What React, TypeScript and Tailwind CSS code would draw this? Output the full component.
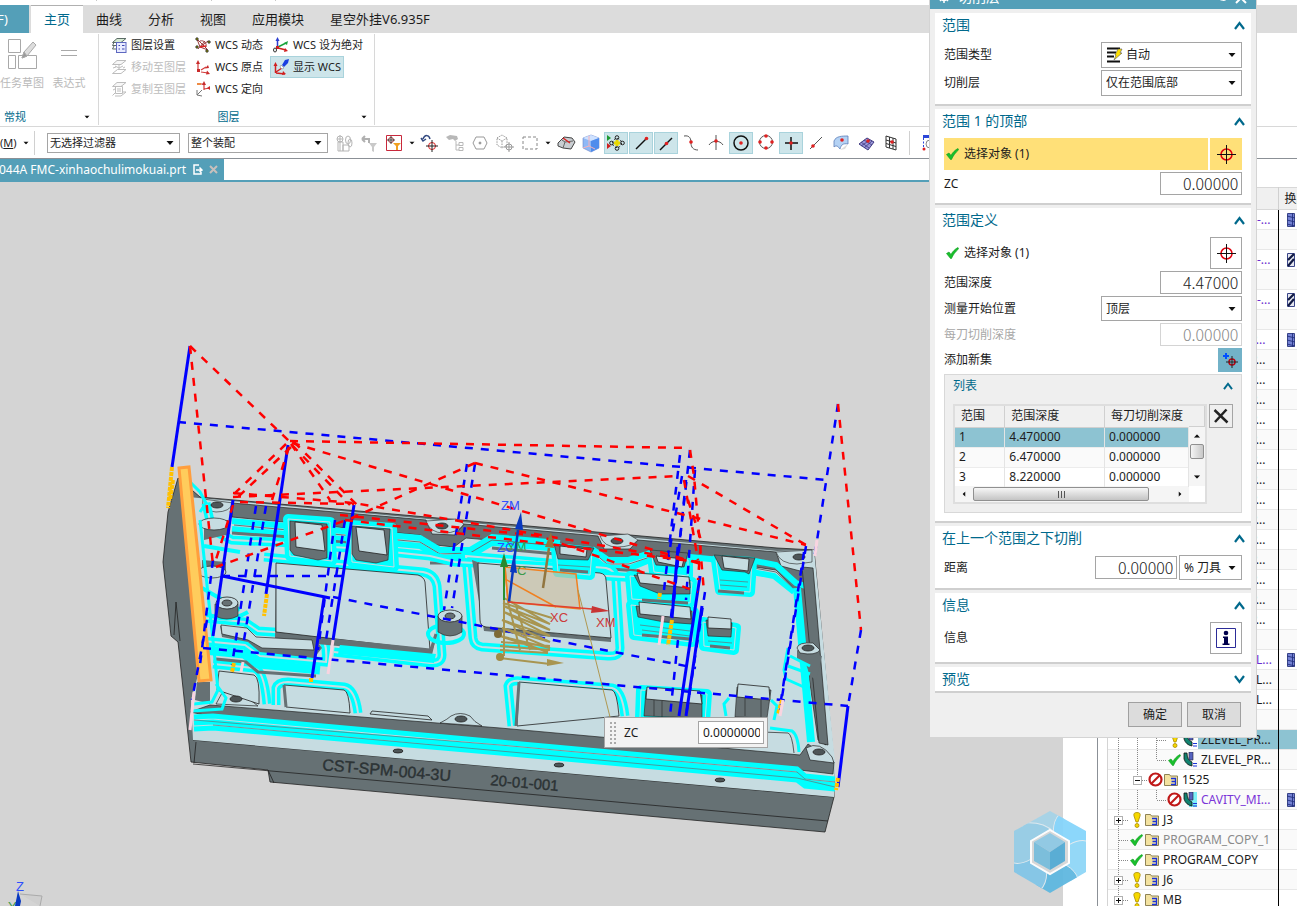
import React, { useState } from 'react';

const FLOOR = '#c6dce1';
const WALL = '#667174';
const CYAN = '#00ffff';

/* ---------- small shared pieces ---------- */

const Caret = ({ className = '' }: { className?: string }) => (
  <svg width="8" height="4" viewBox="0 0 8 4" className={`shrink-0 pointer-events-none ${className}`}>
    <path d="M0.5 0h7L4 4z" fill="#111" />
  </svg>
);

interface DropdownProps {
  label: string;
  value: string;
  className: string;
  icon?: React.ReactNode;
}

const Dropdown: React.FC<DropdownProps> = ({ label, value, className, icon }) => (
  <div className={`flex items-center border border-[#a5a5a5] bg-white ${className}`}>
    {icon}
    <select aria-label={label} defaultValue={value} className="min-w-0 flex-1 appearance-none bg-transparent outline-none">
      <option>{value}</option>
    </select>
    <Caret className="mr-[5px]" />
  </div>
);

const Check = () => (
  <svg width="13" height="12" viewBox="0 0 13 12" className="shrink-0">
    <path d="M0.5 6.5L3 5l2 2.5C6.500 4.500 9 2 12 0.500l0.500 1.500C9.500 4.500 7 8 5.500 11.500H4.500z" fill="#19c02c" stroke="#0a9a1c" strokeWidth=".6" />
  </svg>
);

const Target = () => (
  <svg width="20" height="20" viewBox="0 0 20 20" fill="none" shapeRendering="crispEdges">
    <circle cx="10.500" cy="10.500" r="5.500" stroke="#e0000c" strokeWidth="1.500" shapeRendering="auto" />
    <path d="M10.500 1v19M1 10.500h19" stroke="#111" />
  </svg>
);

/* ---------- ribbon icons ---------- */

const Layers = ({ kind }: { kind: 'settings' | 'move' | 'copy' }) => {
  const muted = kind !== 'settings';
  return (
    <svg width="16" height="16" viewBox="0 0 16 16" fill="none" stroke={muted ? '#bdbdbd' : '#5b6b66'}>
      <path d="M6 1.500h9l-5 4H1.500z" fill={muted ? '#f7f7f7' : '#d6ebd4'} />
      {kind === 'settings' && (
        <>
          <path d="M3 5.500L1.500 8.500H5M3 9L1.500 12H5" />
          <rect x="5.500" y="5.500" width="9.500" height="10" fill="#e9ecff" stroke="#5d68c0" />
          <path d="M7.500 8.500h1.500M7.500 12h1.500M11 8.500h2.500M11 12h2.500" stroke="#3b46b0" />
        </>
      )}
      {kind === 'move' && <path d="M4 7l4 2 4-2M8 6v5M1.500 14.500l5-4H15l-5 4zM2 9l3-1M12 9l2-1" />}
      {kind === 'copy' && <path d="M4.500 5.500h7v7h-7zM6 8h4M6 10h4M1.500 14.500l3-3M4 15h6l5-4h-3M2 9l2-1" />}
    </svg>
  );
};

const WcsIcon = ({ kind }: { kind: 'move' | 'origin' | 'orient' | 'abs' | 'show' }) => (
  <svg width="16" height="16" viewBox="0 0 16 16" fill="none">
    {kind === 'move' && (
      <>
        <path d="M2 2l3 8 8 3M5 10l8-6M3 3l9 9M3 12l7-8M5 4c4-1 7 2 6 6" stroke="#9a3a3a" />
        <path d="M5 10l6-1" stroke="#e02020" strokeWidth="1.500" />
        <path d="M1 1h2v2H1zM13 4h2v2h-2zM1 9h2v2H1zM11 13h2v2h-2z" fill="#e8e800" stroke="#222" strokeWidth=".9" />
      </>
    )}
    {kind === 'origin' && (
      <>
        <path d="M3 4v6M6 13l7 1M6 11l5-3" stroke="#d23a3a" strokeWidth="1.200" />
        <path d="M3 1l2 4H1zM15 15l-4 .5 1-4zM13 6l1 3-4 .5zM2 10h3v3H2z" fill="#c92b2b" />
      </>
    )}
    {kind === 'orient' && (
      <>
        <path d="M2 3h7M9 2v7M9 8l6-1" stroke="#d23a3a" strokeWidth="1.200" />
        <path d="M9 0l2 4H7zM15 5v4l-3-2z" fill="#c92b2b" />
        <path d="M2 2h4v2H2z" fill="#ee8b44" />
        <path d="M2 9v5l5 1M2 14l5-5" stroke="#777" />
      </>
    )}
    {kind === 'abs' && (
      <>
        <path d="M4.500 3v8" stroke="#2c3fd0" strokeWidth="1.500" />
        <path d="M4.500 0l2 4h-4z" fill="#2c3fd0" />
        <path d="M5 10l8-4" stroke="#19a33a" strokeWidth="1.500" />
        <path d="M15 4l-1 4-3-2z" fill="#19a33a" />
        <path d="M5 11l8 2" stroke="#d02020" strokeWidth="1.500" />
        <path d="M15 14l-4 1 1-4zM3 9h3v3H3z" fill="#d02020" />
        <ellipse cx="2" cy="13" rx="1.500" ry="2" stroke="#333" />
      </>
    )}
    {kind === 'show' && (
      <>
        <path d="M2.500 6v8M3 14l9 1M3 13l6-4" stroke="#d02020" strokeWidth="1.500" />
        <path d="M2.500 3l2 4h-4zM13 15l-4 1 1-4z" fill="#d02020" />
        <path d="M9 6l3-5 4-1-1 4-4 4z" fill="#1b3fe0" />
        <path d="M8 6l3 3-2 1-2-2z" fill="#fff" stroke="#888" strokeWidth=".6" />
      </>
    )}
  </svg>
);

const ribbonLabel = 'flex items-center gap-1 h-[22px] whitespace-nowrap';

const Ribbon = () => (
  <div className="flex h-[93px] py-px bg-white text-[11px] leading-4">
    <div className="flex flex-col justify-between w-[99px] border-r border-[#d8d8d8] shrink-0">
      <div className="flex pt-[3px] text-[#b9b9b9]">
        <button className="flex flex-col items-center w-[46px] pr-[2px] shrink-0 whitespace-nowrap">
          <svg width="32" height="34" viewBox="0 0 32 34" fill="none" stroke="#a9a9a9">
            <path d="M2.500 2.500h12v13h-12zM2.500 18.500h7v13h-7zM12.500 18.500h18v13h-18z" fill="#fff" />
            <path d="M16 21l2-6L27 5l3 3-9 11z" fill="#ddd" />
            <path d="M16 21l2-6 3 4z" fill="#999" />
          </svg>
          <span className="mt-1">任务草图</span>
        </button>
        <button className="flex flex-col items-center w-[46px] shrink-0 whitespace-nowrap">
          <svg width="32" height="34" viewBox="0 0 32 34" stroke="#a9a9a9">
            <path d="M8 13.500h16M8 18.500h16" />
          </svg>
          <span className="mt-1">表达式</span>
        </button>
      </div>
      <div className="flex items-center justify-between pl-1 pr-[7px] text-[#00698c]">
        常规 <Caret className="scale-75" />
      </div>
    </div>
    <div className="flex flex-col justify-between w-[276px] border-r border-[#d8d8d8] shrink-0">
      <div className="flex pl-3">
        <div className="w-[84px] shrink-0">
          <button className={ribbonLabel}><Layers kind="settings" />图层设置</button>
          <button className={`${ribbonLabel} text-[#bdbdbd]`}><Layers kind="move" />移动至图层</button>
          <button className={`${ribbonLabel} text-[#bdbdbd]`}><Layers kind="copy" />复制至图层</button>
        </div>
        <div className="w-[75px] shrink-0">
          <button className={ribbonLabel}><WcsIcon kind="move" />WCS 动态</button>
          <button className={ribbonLabel}><WcsIcon kind="origin" />WCS 原点</button>
          <button className={ribbonLabel}><WcsIcon kind="orient" />WCS 定向</button>
        </div>
        <div className="shrink-0">
          <button className={`${ribbonLabel} pl-[3px]`}><WcsIcon kind="abs" />WCS 设为绝对</button>
          <button className={`${ribbonLabel} pl-[2px] pr-[2px] border border-[#a9d3dc] bg-[#cde5ea]`}><WcsIcon kind="show" />显示 WCS</button>
        </div>
      </div>
      <div className="flex items-center text-[#00698c] pr-[6px]">
        <span className="flex-1 text-center pr-[2px]">图层</span> <Caret className="scale-75" />
      </div>
    </div>
  </div>
);

/* ---------- selection bar ---------- */

interface Tool {
  id: string;
  on?: boolean;
  menu?: boolean;
  art: React.ReactNode;
}

const dot = (x: number, y: number) => <circle cx={x} cy={y} r="1.800" fill="#e02020" stroke="none" />;

const tools: Tool[] = [
  { id: 'assembly', art: <g stroke="#b5b5b5"><path d="M6 2v16M3 6h6M4 9h5v9H4zM9 12h6v6H9z" /><circle cx="6" cy="6" r="3" /><ellipse cx="14" cy="7" rx="2.500" ry="4" /><ellipse cx="16" cy="10" rx="2" ry="4" /></g> },
  { id: 'reset-filter', art: <g><path d="M3 6h7v4M3 6l3-3M3 6l3 3" stroke="#b0b0b0" strokeWidth="2" /><path d="M10 10h8l-3 4v5l-2-1v-4z" fill="#c9c9c9" /></g> },
  { id: 'filter', menu: true, art: <g><path d="M2.500 2.500h15v15h-15z" stroke="#c8283c" /><circle cx="7" cy="7" r="2.500" stroke="#933" /><path d="M7 3v8M3 7h8" stroke="#444" /><path d="M9 10h8l-3 3v4h-2v-4z" fill="#f0a020" /></g> },
  { id: 'deselect', art: <g><path d="M3 6C5 1 9 2 10 6M1 5l2 3 3-2" stroke="#334a80" strokeWidth="1.500" /><circle cx="12" cy="13" r="3.500" stroke="#e02020" /><path d="M12 7v12M6 13h12" stroke="#222" /></g> },
  { id: 'find-tree', art: <g><path d="M1 4l4-2 7 1 1 3-3 2-2-2-4 1z" fill="#b8b8b8" /><path d="M11 8v9h3M11 12h3M14 9.500h4v3h-4zM14 14.500h4v3h-4z" stroke="#b8b8b8" /></g> },
  { id: 'hex', art: <g stroke="#999"><path d="M6 4h8l3 6-3 6H6l-3-6z" /><circle cx="10" cy="10" r="1" fill="#888" /></g> },
  { id: 'cube-target', art: <g stroke="#999"><path d="M2 5l5-3 5 3v7l-5 3-5-3zM2 5l5 3 5-3M7 8v7" strokeDasharray="1.500 1" /><circle cx="14" cy="14" r="3" /><path d="M14 9v10M9 14h10" /></g> },
  { id: 'rect', menu: true, art: <path d="M3 4h14v12H3z" stroke="#888" strokeDasharray="3 2" /> },
  { id: 'shade', art: <g><path d="M2 10l6-6 8 1 3 4-4 7-8-1-5-2z" fill="#c9ced2" stroke="#444" /><path d="M7 15l2-6 8-1M9 9L6 7" stroke="#666" /><path d="M7 5l7 5" stroke="#d22" strokeWidth="1.500" /></g> },
  { id: 'cube', art: <g><path d="M2 5l8-3 8 3v10l-8 4-8-4z" fill="#8fb8f6" stroke="#6d84c8" strokeWidth=".6" /><path d="M2 5l8 3 8-3-8-3z" fill="#cfe2ff" /><path d="M10 8v11l8-4V5z" fill="#4f8cec" /><path d="M8 3v10M2 15l6-2 6 3" stroke="#f6b0b8" /></g> },
  { id: 'snap', on: true, art: <g><path d="M1 2l4 3-4 3z" fill="#1c9a30" /><path d="M1 10l4 3-4 3z" fill="#d02020" /><path d="M11 7v6M8 10h6" stroke="#e8d800" strokeWidth="3" /><g stroke="#222"><circle cx="11" cy="4.500" r="1.800" /><circle cx="11" cy="15.500" r="1.800" /><circle cx="5.500" cy="10" r="1.800" /><circle cx="16.500" cy="10" r="1.800" /><circle cx="11" cy="10" r="4.500" strokeDasharray="2 1.500" /></g></g> },
  { id: 'end-point', on: true, art: <g><path d="M5 16L15 6" stroke="#111" strokeWidth="1.500" />{dot(15.5, 5.5)}</g> },
  { id: 'mid-point', on: true, art: <g><path d="M4 17L16 5" stroke="#111" strokeWidth="1.500" />{dot(10.5, 10.5)}</g> },
  { id: 'curve', art: <g><path d="M3 3c6-1 7 3 7 7s2 7 7 7" stroke="#555" />{dot(10, 9)}</g> },
  { id: 'intersect', art: <g><path d="M10 2v15M3 12c3-5 11-5 14 0" stroke="#555" />{dot(10, 8)}</g> },
  { id: 'centre', on: true, art: <g><circle cx="10" cy="10" r="7" stroke="#111" strokeWidth="1.500" />{dot(10, 10)}</g> },
  { id: 'quadrant', art: <g><circle cx="10" cy="9" r="6.500" stroke="#555" />{dot(10, 3)}{dot(10, 15)}{dot(4, 9)}{dot(16, 9)}</g> },
  { id: 'point', on: true, art: <g><path d="M10 4v13M4 10h13" stroke="#111" strokeWidth="1.500" />{dot(10, 10)}</g> },
  { id: 'on-curve', art: <g><path d="M4 16L16 4" stroke="#555" />{dot(7, 13)}</g> },
  { id: 'on-face', art: <g><path d="M3 8c2-5 8-5 14-5v8c-5-1-7 1-8 5-2-3-4-4-6-2z" fill="#b4d2f4" stroke="#5a7cb8" strokeWidth=".8" /><path d="M17 11l-3 5-5 1" fill="#ddd" />{dot(11, 7)}</g> },
  { id: 'mesh', art: <g><path d="M3 11l8-6 7 4-6 8z" fill="#9a96d8" stroke="#3f3a80" /><path d="M5 9l8 6M8 7l8 5M5 13l9-6M8 15l8-7" stroke="#3f3a80" strokeWidth=".8" />{dot(12, 8)}</g> },
  { id: 'grid', art: <g><path d="M5 3l10 3v11L5 14zM5 7l10 3M5 10.500l10 3M8.500 4v11M12 5v11" stroke="#333" />{dot(11, 9)}</g> },
];

const SelectionBar = () => (
  <div className="flex items-center h-8 bg-white border-t border-[#d8d8d8] text-[11px] leading-4 overflow-hidden">
    <button className="flex items-center gap-[5px] w-[35px] h-6 border-r border-[#d0d0d0] mr-3 shrink-0">
      <span>(<u>M</u>)</span> <Caret className="scale-75" />
    </button>
    <Dropdown label="选择过滤器" value="无选择过滤器" className="w-[133px] h-5 pl-[2px] shrink-0" />
    <Dropdown label="选择范围" value="整个装配" className="w-[140px] h-5 pl-[2px] ml-2 mr-1 shrink-0" />
    <div className="flex items-center gap-px shrink-0">
      {tools.map(tool => (
        <React.Fragment key={tool.id}>
          <button
            aria-label={tool.id}
            className={`flex items-center justify-center w-6 h-[22px] border ${tool.on ? 'border-[#a9d3dc] bg-[#cde5ea]' : 'border-transparent'}`}
          >
            <svg width="20" height="20" viewBox="0 0 20 20" fill="none">{tool.art}</svg>
          </button>
          {tool.menu && <Caret className="scale-75 mx-px" />}
        </React.Fragment>
      ))}
    </div>
    <div className="h-6 w-px bg-[#d0d0d0] ml-[6px] mr-3 shrink-0" />
    <svg width="16" height="16" viewBox="0 0 16 16" fill="none" className="shrink-0">
      <path d="M1 1.500h14" stroke="#2b46d8" strokeWidth="3" />
      <path d="M1.500 3v11" stroke="#2b46d8" strokeDasharray="2 1.500" />
      <circle cx="8" cy="9" r="4" stroke="#888" />
      <circle cx="2" cy="14" r="1.500" fill="#d22" />
    </svg>
  </div>
);

/* ---------- model viewport ---------- */

interface Block {
  halo: string;
  side: string;
  top: string;
}

const blocks: Block[] = [
  { halo: 'M288 519L330 522L332 561L290 556Z', side: 'M290 521L327 524L327 558L318 560L294 555L290 550Z', top: 'M295 522L322 525L325 551L296 547Z' },
  { halo: 'M350 525L392 528L394 567L352 562Z', side: 'M352 526L390 529L388 560L376 563L356 560L352 554Z', top: 'M356 527L384 530L387 555L359 551Z' },
  { halo: 'M556 548L592 552L590 575L558 572Z', side: 'M554 544L594 548L588 560L558 559Z', top: 'M560 546L587 549L586 557L560 554Z' },
  { halo: 'M652 556L688 560L688 576L654 572Z', side: 'M650 550L688 553L684 567L656 565Z', top: 'M656 556L684 559L682 567L658 562Z' },
  { halo: 'M716 560L752 562L750 592L720 590Z', side: 'M714 555L755 558L749 574L745 572L722 570Z', top: 'M722 556L749 559L748 571L724 568Z' },
  { halo: 'M630 576L692 582L690 603L632 599Z', side: 'M634 575L690 580L690 594L660 594L640 586Z', top: 'M637 573L689 577L690 588L640 583Z' },
  { halo: 'M631 605L694 612L692 642L634 635Z', side: 'M636 606L692 611L692 624L664 622L638 617Z', top: 'M639 602L690 607L691 619L640 614Z' },
  { halo: 'M703 622L736 628L734 650L704 646Z', side: 'M706 620L732 623L731 637L708 636Z', top: 'M708 617L731 619L731 629L708 628Z' },
  { halo: 'M641 690L707 694L705 722L640 718Z', side: 'M646 690L702 695L702 718L644 716Z', top: 'M647 687L700 691L702 704L646 699Z' },
];

const haloWide = [
  'M264 557L423 572Q435 574 437 586L442 655Q442 664 430 663L334 652',
  'M466 556L606 568Q615 570 616 580L620 648Q620 657 608 656L482 647Q474 646 473 638Z',
  'M205 618L245 622L258 631L318 635Q328 640 326 662L260 656L245 645L203 641',
  'M213 664L254 668Q264 670 267 704',
  'M276 705L276 688Q278 682 288 682L344 687Q355 689 358 713',
  'M512 726L508 686Q510 680 520 681L612 688Q622 690 625 716',
  'M206 503L212 530L232 540L292 543M332 547L350 548M392 552L430 556L455 562L556 567L590 575L640 578',
];

const backCyan = [
  'M232 521L420 538L440 550L470 550L492 537L560 543',
  'M232 529L420 546L440 558L470 556L492 543L560 549',
  'M592 549L608 560L628 560L650 553L720 560M750 560L776 565L796 583L812 588',
  'M592 557L606 568L630 568L650 560',
  'M752 572L774 576L794 592',
];

const redDashes = [
  'M190 346L213 565', 'M190 346L289 441', 'M290 441L690 448', 'M286 444L233 495', 'M291 447L237 498',
  'M289 447L272 500', 'M292 445L350 505', 'M294 442L358 506', 'M291 444L330 500', 'M292 443L704 565',
  'M233 497L680 476', 'M233 493L354 503L704 563', 'M240 502L354 504', 'M475 463L352 518L216 567',
  'M475 463L806 545', 'M340 515L540 536L698 592', 'M690 450L694 476L704 592', 'M688 476L806 545',
  'M688 500L701 540L698 580', 'M838 404L861 630', 'M233 505L214 566', 'M345 520L700 562', 'M684 480L698 560',
];

const blueDashes = [
  'M178 422L827 480', 'M838 404L814 560', 'M203 648L848 706', 'M861 630L848 706', 'M222 576L342 576',
  'M333 597L696 668', 'M207 620L192 700', 'M475 464L452 608', 'M467 464L444 610', 'M256 506L232 665',
  'M266 506L244 640', 'M345 520L326 640', 'M335 520L318 650', 'M806 546L779 716', 'M804 552L781 700',
  'M680 455L664 590', 'M690 450L671 617', 'M686 480L674 600', 'M682 476L668 560', 'M678 640L670 716',
  'M705 592L686 716', 'M695 470L686 600', 'M213 560L200 665',
];

const blueSolid = [
  'M190 346L172 467', 'M288 445L266 594', 'M233 500L213 636', 'M354 505L333 640', 'M324 598L312 678',
  'M678 547L672 618', 'M700 576L679 716', 'M848 706L838 787', 'M222 576L330 598', 'M686 716L702 606',
];

const holes: number[][] = [
  [217, 505, 6, 3], [442, 526, 6, 3], [617, 541, 6, 3], [799, 557, 6, 3], [808, 648, 6, 3], [819, 752, 6, 3],
  [461, 719, 6, 3], [236, 699, 6, 3], [398, 751, 5, 2], [559, 765, 5, 2], [720, 780, 5, 2],
];

const Viewport = () => (
  <svg width="1063" height="724" viewBox="0 182 1063 724" fill="none" className="block shrink-0" aria-label="零件模型">
    {/* body and side walls */}
    <path d="M178 478L168 512L163 562L171 636L178 642L191 762L268 770L270 782L825 832L834 797L834 764L814 550L777 548L200 497Z" fill={WALL} stroke="#222" strokeWidth=".8" />
    <path d="M193 740L833 797M193 764L828 821M268 770L274 783M196 742L194 763M174 635L176 602L180 641" stroke="#222" strokeWidth=".8" />
    <path d="M188 497L777 551L814 550L835 762L834 797L193 740L191 700L205 650Z" fill={FLOOR} />
    {/* back wall */}
    <path d="M232 503L426 520L432 534L455 535L464 524L598 536L604 549L630 549L638 540L776 552L781 566L804 572L826 745L818 740L797 592L776 570L700 559L636 555L624 563L606 561L594 549L466 538L454 547L436 545L420 535L232 517Z" fill={WALL} stroke="#222" strokeWidth=".7" />
    <path d="M426 521Q430 533 444 533Q458 533 464 524L456 519ZM600 536Q604 547 617 547Q632 547 638 540L628 534ZM776 552Q780 564 797 564L812 562L812 550ZM203 499Q200 511 216 512Q230 512 233 503Z" fill={FLOOR} stroke="#222" strokeWidth=".6" />
    {backCyan.map(d => <path key={d} d={d} stroke={CYAN} strokeWidth="6" />)}
    <path d="M234 525L420 542L440 554L470 553L492 540L560 546M754 568L776 572L794 589M594 553L607 564L629 564L650 557" stroke={WALL} strokeWidth="1" />
    <path d="M232 533L290 537M332 541L350 543M492 548L556 554M594 568L640 571M430 563L462 563" stroke={WALL} strokeWidth="3" />
    {/* right wall */}
    <path d="M797 588L811 742" stroke={CYAN} strokeWidth="8" />
    <path d="M802 567L813 568L828 745L819 743Z" fill={WALL} stroke="#222" strokeWidth=".7" />
    <path d="M797 650L797 660L806 664L810 676L816 680L822 656Z" fill={WALL} />
    <path d="M797 648Q798 642 813 643L820 650Q816 656 800 653Z" fill={FLOOR} stroke="#222" strokeWidth=".7" />
    <path d="M788 648L784 670L786 679L806 688M790 656L810 666M788 666L810 674" stroke={CYAN} strokeWidth="3" />
    {/* front wall */}
    <path d="M210 705L500 728L800 755L808 744L834 762L833 774L800 770L500 741L210 716L190 712Z" fill={WALL} stroke="#222" strokeWidth=".7" />
    <path d="M806 748Q820 740 832 757L834 763L810 760Z" fill={FLOOR} stroke="#222" strokeWidth=".7" />
    <path d="M440 723Q448 719 451 716Q460 711 470 716Q474 722 482 726Z" fill={FLOOR} stroke="#222" strokeWidth=".7" />
    <path d="M216 704L222 693Q238 688 258 706Z" fill={FLOOR} stroke="#222" strokeWidth=".7" />
    <path d="M194 717L213 716L500 742L797 769L805 776L835 779M194 723L213 722L500 748L797 775L805 782L835 785M194 729L213 728L500 753L797 780L805 786L835 789" stroke={CYAN} strokeWidth="5" />
    <path d="M194 720L500 745L797 772L805 779L835 782M213 725L500 751L797 778L835 787" stroke={WALL} strokeWidth=".7" />

    {haloWide.map(d => (
      <g key={d}>
        <path d={d} stroke={CYAN} strokeWidth="9" />
        <path d={d} stroke={FLOOR} strokeWidth="2" />
      </g>
    ))}
    {/* left bosses */}
    <path d="M204 520L228 520L230 534L204 540ZM202 560L226 562L226 574L202 576Z" fill={WALL} />
    <ellipse cx="214" cy="524" rx="15" ry="6" fill={FLOOR} stroke="#222" strokeWidth=".7" />
    <ellipse cx="212" cy="572" rx="14" ry="6" fill={FLOOR} stroke="#222" strokeWidth=".7" />
    <path d="M202 588L240 610M204 546L240 552M200 610Q224 626 248 612" stroke={CYAN} strokeWidth="4" />

    {/* raised pads */}
    <path d="M276 563L283 565L284 632L430 648L436 638L432 655L275 640ZM472 560L480 563L486 627L611 638L611 642L484 631Z" fill={WALL} />
    <path d="M340 645L436 654L434 663L338 654Z" fill={CYAN} />
    <path d="M276 563L418 575Q424 577 425 582L430 650L276 632Z" fill={FLOOR} stroke="#222" strokeWidth=".8" />
    <path d="M478 563L600 573Q606 574 606 580L611 638L486 627Q480 626 480 620Z" fill={FLOOR} stroke="#222" strokeWidth=".8" />
    <path d="M332 640L430 650M436 634L431 650" stroke={WALL} strokeWidth="3" />
    <path d="M220 626L245 629L258 640L316 640L322 648L314 658L260 652L248 642L222 637Z" fill={WALL} />
    <path d="M221 625L247 628L256 637L312 640L314 650L262 648L248 640L222 634Z" fill={FLOOR} stroke="#222" strokeWidth=".7" />
    <path d="M204 650L244 654L258 664L320 670" stroke={CYAN} strokeWidth="9" />
    <path d="M216 659L246 662L258 672L316 676" stroke={WALL} strokeWidth="3" />
    <path d="M219 671L254 675Q260 677 259 704L217 690ZM284 685L344 690Q349 691 350 713L286 707ZM519 682L612 690Q617 691 619 716L517 726ZM370 714L372 711L428 716L432 720Z" fill={FLOOR} stroke="#222" strokeWidth=".8" />
    <path d="M284 685L286 707M519 682L516 726" stroke={WALL} strokeWidth="3" />
    <path d="M762 732L788 733Q792 734 794 753" stroke="#222" strokeWidth=".7" />
    <path d="M770 728L792 731Q798 735 799 752" stroke={CYAN} strokeWidth="3" />

    {blocks.map(b => (
      <g key={b.top} strokeLinejoin="round">
        <path d={b.halo} stroke={CYAN} strokeWidth="10" fill={CYAN} />
        <path d={b.halo} stroke={FLOOR} strokeWidth="1" />
        <path d={b.side} fill={WALL} stroke="#222" strokeWidth=".6" />
        <path d={b.top} fill={FLOOR} stroke="#222" strokeWidth=".8" />
      </g>
    ))}
    <path d="M729 698L724 704L726 716M771 700L777 706L774 720" stroke={CYAN} strokeWidth="3" />
    <path d="M737 687L771 690L767 718L735 717Z" fill={WALL} stroke="#222" strokeWidth=".6" />
    <path d="M738 684L769 687L770 700L737 697Z" fill={FLOOR} stroke="#222" strokeWidth=".8" />
    <path d="M745 698V716M761 700V717M654 700V716M662 701V717" stroke="#222" strokeWidth=".6" />
    <path d="M642 600L688 603M642 635L690 639M710 646L730 648M718 591L744 593M560 570L588 572" stroke={WALL} strokeWidth="3" />
    <path d="M640 625L690 631M642 630L690 636M708 641L732 643M720 580L748 582M720 585L747 587M558 565L590 567" stroke={WALL} strokeWidth=".7" />

    {/* cylinders */}
    <ellipse cx="446" cy="634" rx="18" ry="9" stroke={CYAN} strokeWidth="4" />
    <path d="M438 616V632Q450 640 462 632V616ZM215 604V616Q227 622 238 616V604Z" fill={WALL} stroke="#222" strokeWidth=".6" />
    <ellipse cx="450" cy="616" rx="12" ry="6" fill={FLOOR} stroke="#222" strokeWidth=".8" />
    <ellipse cx="450" cy="616" rx="5" ry="3" fill={WALL} stroke="#222" strokeWidth=".8" />
    <ellipse cx="227" cy="603" rx="11" ry="6" fill={FLOOR} stroke="#222" strokeWidth=".8" />
    <ellipse cx="227" cy="603" rx="5" ry="3" fill={WALL} stroke="#222" strokeWidth=".8" />
    {holes.map(([x, y, rx, ry]) => (
      <ellipse key={`${x}-${y}`} cx={x} cy={y} rx={rx} ry={ry} fill="#4d5557" stroke="#222" strokeWidth=".8" />
    ))}

    {/* end plate */}
    <path d="M197 682L210 682L210 704L195 700Z" fill={WALL} />
    <path d="M190 482L200 492L206 503L200 512M200 520L214 650L218 690L212 702L194 704M192 711L222 709L226 698L216 684" stroke={CYAN} strokeWidth="3" />
    <path d="M179 468L189 467L211 680L199 681Z" fill="#ffcc5c" stroke="#ff9e3d" strokeWidth="3" />

    <text x="322" y="770" fontSize="16" fill="#2c3335" stroke="#2c3335" strokeWidth=".4" fontFamily="Liberation Sans, Arial, sans-serif" transform="rotate(5 322 770)">CST-SPM-004-3U</text>
    <text x="490" y="785" fontSize="15" fill="#2c3335" stroke="#2c3335" strokeWidth=".4" fontFamily="Liberation Sans, Arial, sans-serif" transform="rotate(5 490 785)">20-01-001</text>

    {/* range boundaries */}
    <g strokeWidth="2.500">
      {blueDashes.map(d => <path key={d} d={d} stroke="#0000ff" strokeDasharray="8 8" />)}
      {blueSolid.map(d => <path key={d} d={d} stroke="#0000ff" strokeWidth="3" />)}
      {redDashes.map(d => <path key={d} d={d} stroke="#ff0000" strokeDasharray="8 8" />)}
    </g>
    <path d="M172 467L168 508M173 480L170 500M267 594L264 616M234 663L232 672M672 620L668 645M660 593L659 599M782 700L778 714M838 778L836 790M311 678L311 682" stroke="#ffc000" strokeWidth="4" strokeDasharray="4 1" />
    <path d="M333 640L328 674M663 616L659 645M194 692L190 730M783 700L780 716M243 662L241 672M817 540L815 556" stroke="#f8d4e0" strokeWidth="3" />

    {/* work coordinate system */}
    <path d="M505 567L576 574L580 609L508 602Z" fill="#d0bf9f" fillOpacity=".65" stroke="#f08020" strokeWidth="1.500" />
    <path d="M505 579L556 607M505 567L508 602" stroke="#f08020" strokeWidth="1.500" />
    <path d="M578 590L610 717" stroke="#b09850" />
    <path d="M504 598V656M500 658L550 664M504 598L550 624L504 606L550 630L504 612L550 636L502 620L550 642L502 628L550 648L500 636L548 652M503 603L552 618M501 642L550 646M500 646L550 650M500 650L548 653M508 602L520 650M516 606L530 650" stroke="#a89550" strokeWidth="2" />
    <circle cx="498" cy="634" r="4" fill="#7d6a35" />
    <circle cx="500" cy="657" r="4" fill="#a08a45" />
    <path d="M547 659L564 663L547 666Z" fill="#a89550" />
    <path d="M543 588L549 548" stroke="#927640" strokeWidth="2.500" />
    <path d="M551 532L554 548L545 547Z" fill="#927640" />
    <path d="M509 602L518 530" stroke="#0838c0" strokeWidth="2.500" />
    <path d="M521 512L523 530L515 529ZM514 553L517 573L510 572Z" fill="#0838c0" />
    <path d="M504 600V565" stroke="#2a9030" strokeWidth="2" />
    <path d="M504 553L508 567L500 567Z" fill="#2a8a30" />
    <path d="M508 602L592 609" stroke="#e04030" strokeWidth="1.500" />
    <path d="M592 606L610 611L591 613Z" fill="#c83434" />
    <g fontSize="13" fontFamily="Liberation Sans, Arial, sans-serif">
      <text x="501" y="510" fill="#2f4fff">ZM</text>
      <text x="507" y="551" fill="#3a9a4a">YM</text>
      <text x="497" y="552" fill="#2f4fff">ZC</text>
      <text x="517" y="575" fill="#3a9a4a">C</text>
      <text x="550" y="622" fill="#cc3a3a">XC</text>
      <text x="596" y="627" fill="#cc3a3a">XM</text>
      <text x="16" y="891" fill="#2f4fff">Z</text>
      <text x="8" y="911" fill="#3a9a4a">Y</text>
    </g>
    <path d="M20 894L42 896L40 906" stroke="#aaa" fill="#cfcfcf" />
    <path d="M18 891L21 901L20 906H15Z" fill="#0838c0" />
  </svg>
);

/* ---------- operation navigator ---------- */

type Status = 'warn' | 'ok' | 'stop';

interface NavRow {
  name?: string;
  depth?: number;
  purple?: boolean;
  tool?: 'mill' | 'drill';
  status?: Status;
  kind?: 'op' | 'folder';
  toggle?: '+' | '-';
  selected?: boolean;
  last?: boolean;
}

const covered = (name: string, count: number): NavRow[] => Array.from({ length: count }, () => ({ name }));

const navRows: NavRow[] = [
  { name: '-...', purple: true, tool: 'mill' }, {},
  { name: '-...', purple: true, tool: 'drill' }, {},
  { name: '-...', purple: true, tool: 'drill' }, {},
  { name: 'P...', purple: true, tool: 'mill' },
  ...covered('P...', 14), {},
  { name: 'L...', purple: true, tool: 'mill' },
  ...covered('L...', 2), {},
  { name: 'ZLEVEL_PR...', depth: 2, status: 'warn', kind: 'op', selected: true },
  { name: 'ZLEVEL_PR...', depth: 2, status: 'ok', kind: 'op', last: true },
  { name: '1525', depth: 1, status: 'stop', kind: 'folder', toggle: '-', last: true },
  { name: 'CAVITY_MI...', depth: 2, status: 'stop', kind: 'op', purple: true, tool: 'mill', last: true },
  { name: 'J3', depth: 0, status: 'warn', kind: 'folder', toggle: '+' },
  { name: 'PROGRAM_COPY_1', depth: 0, status: 'ok', kind: 'folder' },
  { name: 'PROGRAM_COPY', depth: 0, status: 'ok', kind: 'folder' },
  { name: 'J6', depth: 0, status: 'warn', kind: 'folder', toggle: '+' },
  { name: 'MB', depth: 0, status: 'warn', kind: 'folder', toggle: '+' },
];

const StatusIcon = ({ status }: { status: Status }) => (
  <span className="flex justify-center w-[17px] shrink-0">
    {status === 'ok' && <Check />}
    {status === 'warn' && (
      <svg width="8" height="16" viewBox="0 0 8 16" stroke="#a88a00" strokeWidth=".8" fill="#f6d800">
        <path d="M4 .5Q8 .5 7 4L5 10H3L1 4Q0 .5 4 .5z" />
        <circle cx="4" cy="13.500" r="2" />
      </svg>
    )}
    {status === 'stop' && (
      <svg width="15" height="15" viewBox="0 0 15 15" fill="#fff" stroke="#c01818" strokeWidth="2.200">
        <circle cx="7.500" cy="7.500" r="6" />
        <path d="M3.500 11.500l8-8" />
      </svg>
    )}
  </span>
);

const KindIcon = ({ kind, lit }: { kind: 'op' | 'folder'; lit?: boolean }) =>
  kind === 'folder' ? (
    <svg width="14" height="14" viewBox="0 0 14 14" className="shrink-0">
      <path d="M.5 12.500v-11h5l1 1.500h7v9.500z" fill="#f3e2a0" stroke="#8f8355" />
      <path d="M7 5.500h4.500v3H7.500M11.500 8.500v3H7" fill="none" stroke="#1a32d8" strokeWidth="1.300" />
    </svg>
  ) : (
    <svg width="14" height="15" viewBox="0 0 14 15" className="shrink-0">
      {lit && <path d="M6 0h8v15H6z" fill="#7df0f8" />}
      <path d="M1 1v6q2 6 8 7V10Q4 8 4 1z" fill="#11836f" stroke="#111" strokeWidth=".8" />
      <path d="M6 0h4v8H6z" fill="#5663c0" stroke="#223" strokeWidth=".6" />
      <path d="M10 11.500h4M10 14h4" stroke="#1a32d8" />
    </svg>
  );

const ToolIcon = ({ tool }: { tool: 'mill' | 'drill' }) => (
  <svg width="8" height="14" viewBox="0 0 8 14" className="ml-2">
    <path d="M.5.500h7v13h-7z" fill={tool === 'mill' ? '#7482d4' : '#e4e6ee'} stroke="#3a4588" />
    {tool === 'mill' ? (
      <path d="M5.500 0v14M0 3l8 2M0 7l8 2M0 11l8 2" stroke="#22307e" strokeWidth=".9" />
    ) : (
      <path d="M1 7l6-6M1 13L7 6" stroke="#111a44" strokeWidth="2.200" />
    )}
  </svg>
);

const Guide = ({ row, active }: { row: NavRow; active: boolean }) => (
  <svg width="19" height="20" viewBox="0 0 19 20" className="shrink-0" stroke="#888" fill="none" shapeRendering="crispEdges">
    <path d={active && row.last ? 'M9.500 0v10' : 'M9.500 0v20'} strokeDasharray="1 1" />
    {active && <path d="M10 10.500h9" strokeDasharray="1 1" />}
    {active && row.toggle && (
      <>
        <path d="M5.500 6.500h8v8h-8z" fill="#fff" stroke="#b0b0b0" />
        <path d={row.toggle === '+' ? 'M7 10.500h5M9.500 8v5' : 'M7 10.500h5'} stroke="#111" />
      </>
    )}
  </svg>
);

const coveredIndent = (name?: string) => (name === '-...' ? 'pl-[149px]' : name === 'L...' ? 'pl-[148px]' : 'pl-[142px]');

const Navigator = () => (
  <div className="flex w-[234px] shrink-0 bg-white pl-[34px] overflow-hidden">
    <div className="w-[11px] border-x border-l-[#8b9096] border-r-[#d4d4d4] shrink-0" />
    <div className="flex-1 min-w-0 pt-7">
      <table className="w-full table-fixed border-collapse text-[12px] leading-4">
        <colgroup><col /><col className="w-[19px]" /></colgroup>
        <thead>
          <tr className="h-[22px] bg-[#f0f0f0] border-y border-[#d8d8d8]">
            <th className="border-r border-[#d0d0d0]" aria-label="名称" />
            <th className="pl-[6px] p-0 font-normal text-left whitespace-nowrap overflow-hidden">换刀</th>
          </tr>
        </thead>
        <tbody>
          {navRows.map((row, i) => (
            <tr key={i} className={`h-5 border-b border-[#e8e8e8] ${i % 2 ? 'bg-[#fafafa]' : 'bg-white'}`}>
              <td className="p-0 h-5 border-r border-r-black">
                {row.depth === undefined ? (
                  <div className={`whitespace-nowrap ${coveredIndent(row.name)} ${row.purple ? 'text-[#6a2fd0]' : ''}`}>{row.name}</div>
                ) : (
                  <div className="flex items-center h-[19px] pl-px overflow-hidden">
                    {Array.from({ length: row.depth + 1 }, (_, d) => (
                      <Guide key={d} row={row} active={d === row.depth} />
                    ))}
                    <StatusIcon status={row.status!} />
                    <KindIcon kind={row.kind!} lit={row.purple} />
                    <span className={`flex-1 h-full pl-[3px] ml-px leading-5 whitespace-nowrap ${row.selected ? 'bg-[#8dc3d2]' : ''} ${row.purple ? 'text-[#7a35d8]' : ''} ${row.name === 'PROGRAM_COPY_1' ? 'text-[#8a8a8a]' : ''}`}>
                      {row.name}
                    </span>
                  </div>
                )}
              </td>
              <td className={`p-0 ${row.selected ? 'bg-[#8dc3d2]' : ''}`}>{row.tool && <ToolIcon tool={row.tool} />}</td>
            </tr>
          ))}
        </tbody>
      </table>
    </div>
  </div>
);

/* ---------- cut levels dialog ---------- */

interface SectionProps {
  title: string;
  closed?: boolean;
  children?: React.ReactNode;
}

const Chevron = ({ down, size = 11 }: { down?: boolean; size?: number }) => (
  <svg width={size} height={size - 2} viewBox="0 0 11 9" className={down ? 'rotate-180' : ''}>
    <path d="M1 8l4.500-6L10 8" fill="none" stroke="#00698c" strokeWidth="2.200" />
  </svg>
);

const Section: React.FC<SectionProps> = ({ title, closed = false, children }) => {
  const [isClosed, setIsClosed] = useState(closed);

  return (
    <section className="bg-white border-b-2 border-[#cfcfcf]">
      <button
        onClick={() => setIsClosed(!isClosed)}
        className="flex items-center justify-between w-full h-6 pl-[7px] pr-[6px] text-[14px] text-[#00698c]"
      >
        {title} <Chevron down={isClosed} />
      </button>
      {!isClosed && <div className="flex flex-col gap-[2px] pl-2 pr-[9px] pt-[5px] pb-2">{children}</div>}
    </section>
  );
};

const Row = ({ label, muted, children }: { label: string; muted?: boolean; children: React.ReactNode }) => (
  <div className={`flex items-center justify-between gap-[2px] ${muted ? 'text-[#a8a8a8]' : ''}`}>
    <span className="flex-1 pl-px">{label}</span>
    {children}
  </div>
);

const NumberBox = ({ label, value, muted }: { label: string; value: string; muted?: boolean }) => (
  <div className={`w-[82px] h-[23px] border px-[3px] bg-white ${muted ? 'border-[#d4d4d4] text-[#888]' : 'border-[#a5a5a5] text-[#222]'}`}>
    <input
      aria-label={label}
      defaultValue={value}
      disabled={muted}
      className="block w-full h-[21px] pl-[19px] bg-transparent outline-none text-[16px] leading-[21px] font-light font-['Noto_Sans_CJK_SC',sans-serif]"
    />
  </div>
);

const PickRow = ({ active }: { active?: boolean }) => (
  <div className="flex gap-[2px] h-8 ml-px">
    <div className={`flex flex-1 items-center gap-[5px] pl-[2px] ${active ? 'bg-[#ffe078]' : ''}`}>
      <Check /> 选择对象 (1)
    </div>
    <button aria-label="选择对象" className={`flex items-center justify-center w-8 ${active ? 'bg-[#ffe078]' : 'border border-[#a5a5a5]'}`}>
      <Target />
    </button>
  </div>
);

const ranges = [
  ['1', '4.470000', '0.000000'],
  ['2', '6.470000', '0.000000'],
  ['3', '8.220000', '0.000000'],
];

const RangeList = () => (
  <div className="ml-px h-[139px] px-2 bg-[#efefef] border border-[#d8d8d8]">
    <button className="flex items-center justify-between w-full h-[22px] text-[#00698c]">
      列表 <Chevron size={10} />
    </button>
    <div className="flex items-start gap-[2px] mt-[7px]">
      <div className="w-[254px] border-2 border-[#dedede] bg-white">
        <div className="flex h-[80px]">
          <table className="flex-1 table-fixed border-collapse">
            <colgroup><col className="w-[50px]" /><col className="w-[100px]" /><col className="w-[84px]" /></colgroup>
            <thead>
              <tr className="h-[21px] bg-[#f0f0f0] border-b border-[#d0d0d0]">
                {['范围', '范围深度', '每刀切削深度'].map(h => (
                  <th key={h} className="p-0 pl-[6px] border-r border-[#d0d0d0] last:border-r-0 font-normal text-left whitespace-nowrap">{h}</th>
                ))}
              </tr>
            </thead>
            <tbody>
              {ranges.map((cells, i) => (
                <tr key={cells[0]} className={`h-5 border-b border-[#ececec] last:border-b-0 ${i === 0 ? 'bg-[#8dc3d2]' : i === 1 ? 'bg-[#fafafa]' : ''}`}>
                  {cells.map((c, j) => <td key={j} className="p-0 pl-1 border-r border-[#e4e4e4]">{c}</td>)}
                </tr>
              ))}
            </tbody>
          </table>
          <div className="flex flex-col w-4 shrink-0">
            <div className="h-[21px] bg-[#f0f0f0] border-b border-r border-[#d0d0d0]" />
            <div className="flex flex-col items-center flex-1 pt-[7px] pb-[7px] bg-[#f5f5f5]">
              <Caret className="rotate-180 scale-90" />
              <div className="w-[14px] h-[15px] mt-[6px] mb-auto border border-[#909090] rounded-[2px] bg-gradient-to-r from-[#f5f5f5] to-[#c8c8c8]" />
              <Caret className="scale-90" />
            </div>
          </div>
        </div>
        <div className="flex items-center h-4 mr-4 pl-[5px] pr-[5px] bg-[#f5f5f5]">
          <Caret className="rotate-90 scale-75" />
          <div className="flex items-center justify-center gap-[2px] w-[176px] h-[14px] ml-[5px] mr-auto border border-[#909090] rounded-[2px] bg-gradient-to-b from-[#f7f7f7] to-[#c4c4c4]">
            <i className="w-px h-[7px] bg-[#555]" /><i className="w-px h-[7px] bg-[#555]" /><i className="w-px h-[7px] bg-[#555]" />
          </div>
          <Caret className="-rotate-90 scale-75" />
        </div>
      </div>
      <button aria-label="移除" className="flex items-center justify-center w-6 h-6 border border-[#a5a5a5]">
        <svg width="16" height="16" viewBox="0 0 16 16" stroke="#222" strokeWidth="2.500">
          <path d="M1.500 2l13 12.500M13.500 1.500L2 14" />
        </svg>
      </button>
    </div>
  </div>
);

const CutLevelsDialog = () => (
  <div className="absolute right-10 -top-[15px] w-[328px] bg-[#efefef] border-x border-b border-[#d4d4d4] text-[12px] leading-4">
    <div className="flex items-center h-6 pl-2 pr-2 gap-2 bg-[#549fb8] text-white text-[14px]">
      <svg width="12" height="12" viewBox="0 0 12 12" stroke="#fff" fill="none">
        <circle cx="6" cy="6" r="3" strokeWidth="2.500" />
        <path d="M6 0v12M0 6h12M2 2l8 8M10 2l-8 8" strokeWidth="1.500" />
        <circle cx="6" cy="6" r="1.500" fill="#549fb8" stroke="none" />
      </svg>
      <span className="flex-1">切削层</span>
      <svg width="32" height="14" viewBox="0 0 32 14" stroke="#fff" strokeWidth="2" fill="none">
        <path d="M3 6a4 4 0 1 0 5-4M20 3l10 10M30 3L20 13" />
      </svg>
    </div>
    <div className="flex flex-col gap-[3px] px-[5px] pt-1">
      <Section title="范围">
        <Row label="范围类型">
          <Dropdown
            label="范围类型"
            value="自动"
            className="w-[141px] h-[26px] pl-1"
            icon={
              <svg width="18" height="16" viewBox="0 0 18 16" className="mr-[2px] shrink-0">
                <path d="M1 1.500h13M1 5.500h9M1 9.500h7M1 14.500h13" stroke="#111" strokeWidth="2" />
                <path d="M12 2h4l-2 4h2L8 13l2-5H9z" fill="#ffe000" stroke="#555" strokeWidth=".6" />
              </svg>
            }
          />
        </Row>
        <Row label="切削层">
          <Dropdown label="切削层" value="仅在范围底部" className="w-[141px] h-[26px] pl-1" />
        </Row>
      </Section>
      <Section title="范围 1 的顶部">
        <PickRow active />
        <Row label="ZC"><NumberBox label="ZC" value="0.000000" /></Row>
      </Section>
      <Section title="范围定义">
        <PickRow />
        <Row label="范围深度"><NumberBox label="范围深度" value="4.470000" /></Row>
        <Row label="测量开始位置">
          <Dropdown label="测量开始位置" value="顶层" className="w-[141px] h-[25px] pl-1" />
        </Row>
        <Row label="每刀切削深度" muted><NumberBox label="每刀切削深度" value="0.000000" muted /></Row>
        <Row label="添加新集">
          <button aria-label="添加新集" className="flex items-center justify-center w-6 h-6 bg-[#72b2c8]">
            <svg width="18" height="18" viewBox="0 0 18 18" fill="none">
              <path d="M5 2v6M2 5h6" stroke="#0050ff" strokeWidth="2" />
              <circle cx="11" cy="11" r="3" stroke="#c00010" strokeWidth="1.500" />
              <path d="M11 5v12M5 11h12" stroke="#222" />
            </svg>
          </button>
        </Row>
        <RangeList />
      </Section>
      <Section title="在上一个范围之下切削">
        <Row label="距离">
          <NumberBox label="距离" value="0.000000" />
          <Dropdown label="距离单位" value="% 刀具" className="w-[63px] h-[25px] pl-1" />
        </Row>
      </Section>
      <Section title="信息">
        <Row label="信息">
          <button aria-label="信息" className="flex items-center justify-center w-8 h-8 border border-[#a5a5a5]">
            <svg width="20" height="20" viewBox="0 0 20 20">
              <path d="M.500.500h19v19H.500z" fill="#fff" stroke="#2c2c98" />
              <circle cx="10" cy="5" r="2.300" fill="#00004c" />
              <path d="M7 8.500h5v7h1.500V17h-7v-1.500H8V10H7z" fill="#00004c" />
            </svg>
          </button>
        </Row>
      </Section>
      <Section title="预览" closed />
    </div>
    <div className="flex justify-end gap-[5px] pt-[9px] pb-[10px] pr-[15px]">
      <button className="w-[54px] h-[25px] border border-[#a0a0a0] bg-[#dcdcdc]">确定</button>
      <button className="w-[54px] h-[25px] border border-[#a0a0a0] bg-[#dcdcdc]">取消</button>
    </div>
  </div>
);

/* ---------- page ---------- */

const menuTabs = ['曲线', '分析', '视图', '应用模块', '星空外挂V6.935F'];

const petals: [number, string][] = [
  [0, '#a6d3e8'], [60, '#86d5fb'], [120, '#8fd6f7'], [180, '#5fb8e0'], [240, '#82c6e8'], [300, '#96cde6'],
];

const CubeLogo = () => (
  <svg width="72" height="82" viewBox="0 0 72 82" className="absolute right-[211px] bottom-[13px] pointer-events-none opacity-95">
    <clipPath id="hex"><path d="M36 0L72 20V61L36 82L0 61V20z" /></clipPath>
    <g clipPath="url(#hex)">
      {petals.map(([angle, fill]) => (
        <path key={angle} d="M15 5L36 -4L50 7Q59 22 55 34L36 20L20 28Q10 22 8 14z" fill={fill} stroke="#dfeaf0" transform={`rotate(${angle} 36 41)`} />
      ))}
    </g>
    <path d="M36 19L55 30V52L36 63L17 52V30z" fill="#d8d8d8" stroke="#fff" strokeWidth="2" />
    <path d="M36 22L51 31L36 41L20 31z" fill="#8fc9e4" />
    <path d="M20 31L36 41V59L20 50z" fill="#78bddc" />
    <path d="M51 31L36 41V59L51 50z" fill="#54abd4" />
  </svg>
);

const App = () => (
  <div className="relative flex flex-col h-screen overflow-hidden bg-white text-[#1c1c1c] font-['Noto_Sans','Noto_Sans_CJK_SC',sans-serif]">
    <div className="flex items-start h-[5px] shrink-0">
      <i className="w-[97px] h-px border-r border-[#c8c8c8]" />
      <i className="w-[115px] h-px border-r border-[#c8c8c8]" />
      <i className="w-16 h-px border-r border-[#c8c8c8]" />
    </div>
    <nav className="flex h-7 bg-[#dcdcdc] text-[13px] leading-7 whitespace-nowrap shrink-0">
      <button className="w-[29px] h-full pr-[21px] mr-[2px] flex justify-end bg-[#549fb8] text-white">F)</button>
      <button className="px-[13px] bg-white border-t border-[#b0b0b0] text-[#00698c] leading-[27px]">主页</button>
      {menuTabs.map(tab => <button key={tab} className="px-[13px]">{tab}</button>)}
    </nav>
    <Ribbon />
    <SelectionBar />
    <main className="flex flex-1 min-h-0 border-t border-[#8b9096]">
      <div className="flex flex-col flex-1 min-w-0">
        <div className="flex h-[23px] border-b-2 border-[#549fb8] shrink-0">
          <div className="flex items-center justify-end w-56 pr-[6px] bg-[#549fb8] text-white text-[12px] overflow-hidden whitespace-nowrap">
            044A FMC-xinhaochulimokuai.prt
            <svg width="10" height="11" viewBox="0 0 10 11" fill="none" stroke="#fff" strokeWidth="1.500" className="ml-[7px] shrink-0">
              <path d="M6 1H1v9h7V8M3 6h5M6.500 3.500L9 6 6.500 8" />
            </svg>
            <button aria-label="关闭" className="ml-[6px]">
              <svg width="9" height="9" viewBox="0 0 9 9" stroke="#c8c0bc" strokeWidth="2">
                <path d="M1 1l7 7M8 1L1 8" />
              </svg>
            </button>
          </div>
        </div>
        <div className="relative flex-1 overflow-hidden bg-[#d4d4d4]">
          <Viewport />
          <div className="absolute left-[604px] top-[535px] flex items-center w-[164px] h-[31px] pl-1 pr-[3px] bg-[#f2f2f2] border border-[#a5a5a5] text-[12px]">
            <svg width="8" height="24" viewBox="0 0 8 24" className="mr-[7px]">
              <path d="M2 1v23M6 1v23" stroke="#aaa" strokeWidth="2" strokeDasharray="2 2" />
            </svg>
            <label htmlFor="zc" className="flex-1">ZC</label>
            <div className="w-[66px] h-[23px] px-[3px] bg-white border border-[#a5a5a5]">
              <input id="zc" defaultValue="0.00000000" className="block w-full h-[21px] pl-px outline-none" />
            </div>
          </div>
        </div>
      </div>
      <Navigator />
    </main>
    <CutLevelsDialog />
    <CubeLogo />
  </div>
);

export default App;
